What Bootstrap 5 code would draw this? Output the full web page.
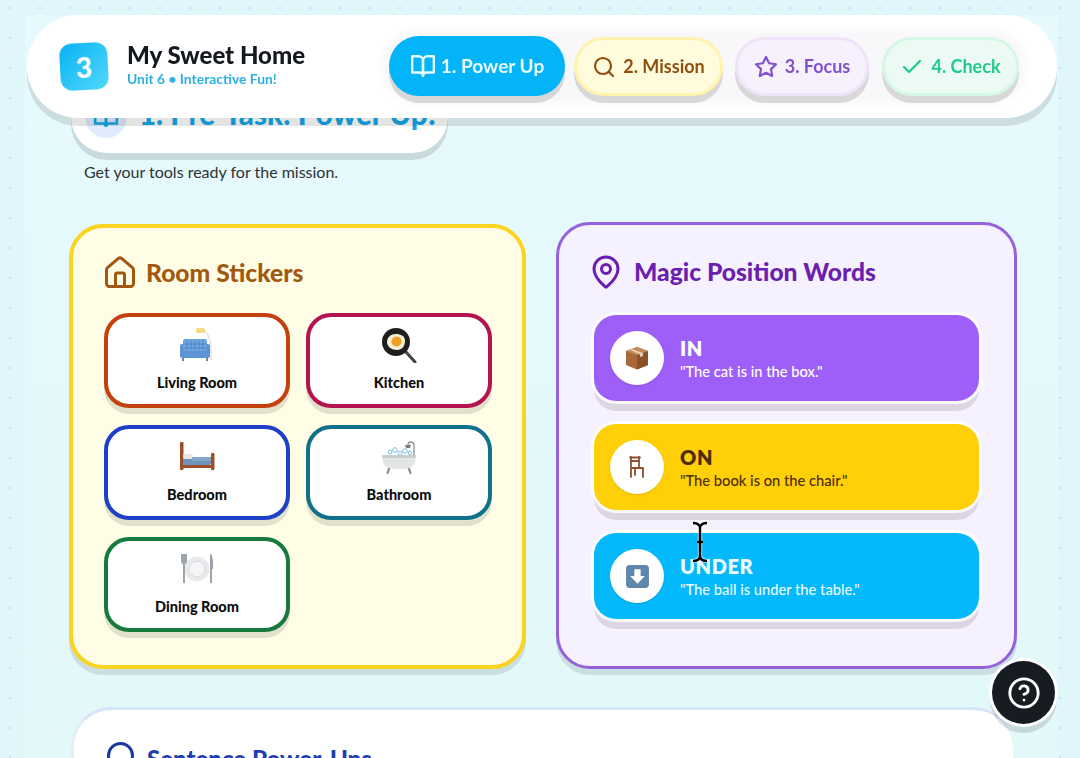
<!DOCTYPE html>
<html lang="en">
<head>
<meta charset="UTF-8">
<meta name="viewport" content="width=device-width, initial-scale=1.0">
<link href="https://cdn.jsdelivr.net/npm/bootstrap@5.3.3/dist/css/bootstrap.min.css" rel="stylesheet">
<title>My Sweet Home</title>
<style>
html, body { height: 758px; overflow: hidden; }
body {
  font-family: "Lato", "Noto Sans", sans-serif;
  background-color: #e0f6fb;
  background-image: radial-gradient(#bfe7f0 1.5px, transparent 1.6px);
  background-size: 30px 30px;
  background-position: -5px -7px;
  color: #14181f;
}
.shell { margin: 15px 22px 0 25px; height: 743px; background: linear-gradient(#e6fafe, #e3f8f9); position: relative; }
.top-bar {
  position: sticky; top: 15px; z-index: 5; height: 103px; margin: 0 1px 0 2px;
  background: #fff; border-radius: 52px; box-shadow: 0 8px 0 rgba(0,0,0,.11);
  padding: 0 38px 0 33px;
}
.unit-badge {
  width: 48px; height: 47px; border-radius: 12px; transform: rotate(-3deg);
  background: linear-gradient(135deg, #08b2f4, #52d8fb); color: #fff;
  font-size: 28px; font-weight: 900;
}
.unit-text { margin: 0 0 5px 19px; }
.unit-title { font-size: 24px; font-weight: 900; line-height: 30px; }
.unit-sub { font-size: 13.9px; font-weight: 700; color: #2cb1e2; line-height: 18px; }
.step-wrap { margin-left: auto; gap: 9px; background: #f8f8fa; border-radius: 36px; padding: 0; box-shadow: 0 0 10px 8px #f8f8fa; }
.step-pill {
  height: 59px; border-radius: 30px; font-size: 18px; font-weight: 700; border: 3px solid transparent;
  box-shadow: 0 7px 0 rgba(0,0,0,.13); gap: 7px; justify-content: center;
}
.step-pill svg { fill: none; stroke: currentColor; stroke-width: 2.2; stroke-linecap: round; stroke-linejoin: round; }
.step-blue { width: 176px; height: 60px; background: #03b5f8; color: #e8f9ff; margin-top: -1px; border: 0; font-size: 19px; gap: 5px; }
.step-yellow { width: 149px; background: #fffbdd; border-color: #fff3ae; color: #8f4f0e; }
.step-purple { width: 134px; background: #f7f0fd; border-color: #eee3f8; color: #8052cc; margin-left: 3px; }
.step-green { width: 137px; background: #ebfbf3; border-color: #d5f7e5; color: #22c98e; margin-left: 4px; }

.page-body { padding: 0 0 0 44px; }
.title-tag {
  width: 377px; height: 60px; margin: -25px 0 0 2px; background: #fff; padding: 0 14px;
  border-radius: 0 0 36px 36px; box-shadow: 0 7px 0 rgba(0,0,0,.12); gap: 12px;
  font-size: 29.5px; font-weight: 900; color: #12a8e8; white-space: nowrap;
}
.title-words { margin-top: -1px; }
.title-dot { width: 42px; height: 42px; border-radius: 50%; background: #e0ebfd; flex: none; margin-top: 3px; }
.title-dot svg { fill: none; stroke: #12a8e8; stroke-width: 2.4; }
.title-note { font-size: 16px; margin: 9px 0 0 15px; line-height: 20px; color: #2e3136; }

.two-up { display: grid; grid-template-columns: 457px 461px; column-gap: 30px; margin-top: 40px; }
.panel { border-radius: 34px; box-shadow: 0 6px 0 rgba(0,0,0,.1); }
.panel-rooms { height: 445px; margin-top: 2px; background: #fffde6; border: 4px solid #fbd321; padding: 30px 31px; }
.panel-words { height: 447px; background: #f6f1fe; border: 3.5px solid #9561dc; padding: 32px 34px; }
.panel-head { height: 30px; font-size: 24.6px; font-weight: 900; line-height: 30px; }
.panel-head svg { fill: none; stroke: currentColor; stroke-width: 2; stroke-linecap: round; stroke-linejoin: round; flex: none; }
.head-brown { color: #a2590f; gap: 8px; margin-left: -2px; }
.head-purple { color: #6b1eb0; gap: 10px; margin-left: -5px; }

.room-grid { display: grid; grid-template-columns: 186px 186px; gap: 17px 16px; margin-top: 25px; }
.room-tile {
  height: 95px; background: #fff; border: 4px solid; border-radius: 25px;
  box-shadow: 0 6px 0 rgba(0,0,0,.11); font-size: 14.5px; font-weight: 900; color: #0d0d0d;
  padding-top: 10px;
}
.room-tile svg { display: block; margin-bottom: 9px; }
.edge-orange { border-color: #c2410c; }
.edge-rose { border-color: #b3134f; }
.edge-blue { border-color: #1d40c6; }
.edge-teal { border-color: #10718a; }
.edge-green { border-color: #167a3c; }

.word-stack { gap: 23px; margin: 28px 0 0 1px; }
.word-row {
  height: 86px; width: 385px; border-radius: 22px; padding: 0 16px; gap: 16px;
  box-shadow: 0 0 0 3px rgba(255,255,255,.8), 0 10px 0 0 rgba(0,0,0,.11);
}
.word-purple { background: #9e5ff9; color: #fff; }
.word-yellow { background: #ffd007; color: #4f2c06; }
.word-blue { background: #03b8fb; color: #e9fbff; }
.word-disc { width: 54px; height: 54px; border-radius: 50%; background: #fff; flex: none; box-shadow: 0 1px 2px rgba(0,0,0,.12); }
.word-name { font-size: 20px; font-weight: 800; line-height: 24px; letter-spacing: .6px; }
.word-line { font-size: 14.7px; font-weight: 500; line-height: 20px; margin-top: 1px; }

.lower-card {
  margin: 38px 0 0 2px; width: 942px; height: 120px; background: #fff; border-radius: 40px;
  border-top: 3px solid #d6e4f8; border-left: 3px solid #e4eef9; padding: 29px 30px;
  font-size: 24px; font-weight: 900; color: #1e40af; gap: 7px;
}
.lower-card svg { fill: none; stroke: #1e3a9f; stroke-width: 2; flex: none; }
.lower-words { margin-top: 2px; }

.help-fab {
  position: fixed; left: 992px; top: 661px; width: 63px; height: 63px; border-radius: 50%; z-index: 6;
  background: #171b22; box-shadow: 0 0 0 3px #fff, 0 7px 0 2px rgba(0,0,0,.12); border: 0;
}
.help-fab svg { fill: none; stroke: #fff; stroke-width: 2; stroke-linecap: round; stroke-linejoin: round; }
.text-cursor { position: fixed; left: 690px; top: 521px; z-index: 7; }
</style>
</head>
<body>

<div class="shell">

  <!--HEADER-->
  <header class="top-bar d-flex align-items-center">
    <div class="unit-badge d-flex align-items-center justify-content-center flex-shrink-0">3</div>
    <div class="unit-text">
      <div class="unit-title">My Sweet Home</div>
      <div class="unit-sub">Unit 6 • Interactive Fun!</div>
    </div>
    <nav class="step-wrap d-flex align-items-center">
      <div class="step-pill step-blue d-flex align-items-center">
        <svg width="26" height="26" viewBox="0 0 24 24"><path d="M2 3h6a4 4 0 0 1 4 4v14a3 3 0 0 0-3-3H2z"/><path d="M22 3h-6a4 4 0 0 0-4 4v14a3 3 0 0 1 3-3h7z"/></svg>
        1. Power Up
      </div>
      <div class="step-pill step-yellow d-flex align-items-center">
        <svg width="24" height="24" viewBox="0 0 24 24"><circle cx="11" cy="11" r="8"/><path d="m21 21-4.3-4.3"/></svg>
        2. Mission
      </div>
      <div class="step-pill step-purple d-flex align-items-center">
        <svg width="24" height="24" viewBox="0 0 24 24"><polygon points="12 2 15.09 8.26 22 9.27 17 14.14 18.18 21.02 12 17.77 5.82 21.02 7 14.14 2 9.27 8.91 8.26 12 2"/></svg>
        3. Focus
      </div>
      <div class="step-pill step-green d-flex align-items-center">
        <svg width="24" height="24" viewBox="0 0 24 24"><path d="M20 6 9 17l-5-5"/></svg>
        4. Check
      </div>
    </nav>
  </header>

  <div class="page-body">
    <div class="title-tag d-flex align-items-start">
      <div class="title-dot d-flex align-items-center justify-content-center">
        <svg width="26" height="26" viewBox="0 0 24 24"><path d="M2 3h6a4 4 0 0 1 4 4v14a3 3 0 0 0-3-3H2z"/><path d="M22 3h-6a4 4 0 0 0-4 4v14a3 3 0 0 1 3-3h7z"/></svg>
      </div>
      <span class="title-words">1. Pre-Task: Power Up!</span>
    </div>
    <p class="title-note">Get your tools ready for the mission.</p>

    <div class="two-up">

      <!--ROOMS-->
      <section class="panel panel-rooms">
        <div class="panel-head head-brown d-flex align-items-center">
          <svg width="36" height="36" viewBox="0 0 24 24"><path d="M15 21v-8a1 1 0 0 0-1-1h-4a1 1 0 0 0-1 1v8"/><path d="M3 10a2 2 0 0 1 .709-1.528l7-5.999a2 2 0 0 1 2.582 0l7 5.999A2 2 0 0 1 21 10v9a2 2 0 0 1-2 2H5a2 2 0 0 1-2-2z"/></svg>
          Room Stickers
        </div>
        <div class="room-grid">
          <div class="room-tile edge-orange d-flex flex-column align-items-center">
            <svg width="36" height="36" viewBox="0 0 36 36"><path d="M20 3h2c6 1 10 6 10 24v6" fill="none" stroke="#d4d4d4" stroke-width="1"/><rect x="17" y="1" width="9" height="5" rx="1.500" fill="#f3dc85"/><rect x="1" y="17" width="30" height="14" rx="2" fill="#5b93d3"/><rect x="4" y="12" width="24" height="12" rx="2" fill="#6fa5e0"/><path d="M8 13v10M12 13v10M16 13v10M20 13v10M24 13v10M4 17h24M4 21h24" stroke="#4a7fbe" stroke-width=".7"/><path d="M4 31v3M28 31v3" stroke="#35557e" stroke-width="1.400"/></svg>
            Living Room
          </div>
          <div class="room-tile edge-rose d-flex flex-column align-items-center">
            <svg width="36" height="36" viewBox="0 0 36 36"><path d="M25 25l9 10" stroke="#444" stroke-width="3" stroke-linecap="round"/><circle cx="15" cy="15" r="14" fill="#1e1e1e"/><path d="M6 15c0-5 4-8 9-8s9 2 9 7-3 9-8 9-10-3-10-8z" fill="#f7efd8"/><circle cx="15.500" cy="14.500" r="5" fill="#f0a020"/></svg>
            Kitchen
          </div>
          <div class="room-tile edge-blue d-flex flex-column align-items-center">
            <svg width="36" height="36" viewBox="0 0 36 36"><rect x="1" y="3" width="3.500" height="28" rx="1" fill="#9c4f2a"/><rect x="32" y="14" width="3.500" height="17" rx="1" fill="#9c4f2a"/><rect x="4" y="26" width="28" height="3" fill="#9c4f2a"/><rect x="4" y="18" width="28" height="8" rx="2" fill="#6d93b8"/><rect x="4" y="15" width="10" height="5" rx="2" fill="#e9e6df"/><rect x="13" y="18" width="19" height="4" fill="#83a6c8"/></svg>
            Bedroom
          </div>
          <div class="room-tile edge-teal d-flex flex-column align-items-center">
            <svg width="36" height="36" viewBox="0 0 36 36"><path d="M33 17V6a3 3 0 0 0-6 0" fill="none" stroke="#8b8f95" stroke-width="1.300"/><path d="M24 6h6l-1 3h-4z" fill="#777b82"/><g fill="none" stroke="#7fc0e6" stroke-width="1"><circle cx="9" cy="13" r="2"/><circle cx="14" cy="11" r="2.300"/><circle cx="19" cy="14" r="2"/><circle cx="24" cy="12" r="2.300"/><circle cx="29" cy="14" r="1.800"/></g><path d="M1 16h34c0 9-4 14-10 14H11C5 30 1 25 1 16z" fill="#e4e6e6"/><path d="M1 16h34l-.4 3H1.400z" fill="#c9cdcf"/><path d="M8 30l-1.500 4M28 30l1.500 4" stroke="#8b8f95" stroke-width="2.200" stroke-linecap="round"/></svg>
            Bathroom
          </div>
          <div class="room-tile edge-green d-flex flex-column align-items-center">
            <svg width="36" height="36" viewBox="0 0 36 36"><circle cx="18" cy="18" r="12.500" fill="#e9eaec"/><circle cx="18" cy="18" r="8" fill="#f4f5f6" stroke="#d8dadd"/><path d="M2 3v7c0 2 1 3 2 3v19h2V13c1 0 2-1 2-3V3" fill="#9ea4ab"/><path d="M32 3c2 3 2.500 9 2 15h-1v14h-2V3z" fill="#9ea4ab"/></svg>
            Dining Room
          </div>
        </div>
      </section>

      <!--POSITION WORDS-->
      <section class="panel panel-words">
        <div class="panel-head head-purple d-flex align-items-center">
          <svg width="36" height="36" viewBox="0 0 24 24"><path d="M20 10c0 4.993-5.539 10.193-7.399 11.799a1 1 0 0 1-1.202 0C9.539 20.193 4 14.993 4 10a8 8 0 0 1 16 0"/><circle cx="12" cy="10" r="3"/></svg>
          Magic Position Words
        </div>
        <div class="word-stack d-flex flex-column">
          <div class="word-row word-purple d-flex align-items-center">
            <div class="word-disc d-flex align-items-center justify-content-center">
              <svg width="24" height="24" viewBox="0 0 24 24"><path d="M12 1l11 4v14l-11 4.500L1 19V5z" fill="#a8683a"/><path d="M12 9l11-4v14l-11 4.500z" fill="#8a5229"/><path d="M12 1l11 4-11 4L1 5z" fill="#c48a58"/><path d="M7 3l11 4v3l-3 1V8.500L5 4z" fill="#e2cdb3"/></svg>
            </div>
            <div>
              <div class="word-name">IN</div>
              <div class="word-line">"The cat is in the box."</div>
            </div>
          </div>
          <div class="word-row word-yellow d-flex align-items-center">
            <div class="word-disc d-flex align-items-center justify-content-center">
              <svg width="24" height="24" viewBox="0 0 24 24"><g fill="none" stroke="#8f4f30" stroke-width="1.800" stroke-linecap="round"><path d="M6 2v20M14 2v11M6 13h12M10 13v7M18 13v9"/><path d="M5 2.500h10M6 6h8"/></g></svg>
            </div>
            <div>
              <div class="word-name">ON</div>
              <div class="word-line">"The book is on the chair."</div>
            </div>
          </div>
          <div class="word-row word-blue d-flex align-items-center">
            <div class="word-disc d-flex align-items-center justify-content-center">
              <svg width="25" height="25" viewBox="0 0 24 24"><rect x="1" y="1" width="22" height="22" rx="3.500" fill="#5f87ab"/><path d="M9 5h6v6.500h4L12 19l-7-7.500h4z" fill="#fff"/></svg>
            </div>
            <div>
              <div class="word-name">UNDER</div>
              <div class="word-line">"The ball is under the table."</div>
            </div>
          </div>
        </div>
      </section>
    </div>

    <section class="lower-card d-flex align-items-start">
      <svg width="36" height="36" viewBox="0 0 24 24"><circle cx="11" cy="11" r="8"/><path d="m21 21-4.300-4.300"/></svg>
      <span class="lower-words">Sentence Power-Ups</span>
    </section>
  </div>
</div>

<!--HELP BUTTON-->
<button class="help-fab d-flex align-items-center justify-content-center p-0" type="button" aria-label="Help">
  <svg width="34" height="34" viewBox="0 0 24 24"><circle cx="12" cy="12" r="10"/><path d="M9.090 9a3 3 0 0 1 5.830 1c0 2-3 3-3 3"/><path d="M12 17h.01"/></svg>
</button>

<!--MOUSE CURSOR-->
<svg class="text-cursor" width="20" height="42" viewBox="0 0 20 42"><path d="M3 2c4 0 6 1 7 4 1-3 3-4 7-4M10 6v30M3 40c4 0 6-1 7-4 1 3 3 4 7 4M7 21h6" fill="none" stroke="#fff" stroke-opacity=".6" stroke-width="4.500"/><path d="M3 2c4 0 6 1 7 4 1-3 3-4 7-4M10 6v30M3 40c4 0 6-1 7-4 1 3 3 4 7 4M7 21h6" fill="none" stroke="#000" stroke-width="2.400"/></svg>

<script src="https://cdn.jsdelivr.net/npm/bootstrap@5.3.3/dist/js/bootstrap.bundle.min.js"></script>
</body>
</html>
